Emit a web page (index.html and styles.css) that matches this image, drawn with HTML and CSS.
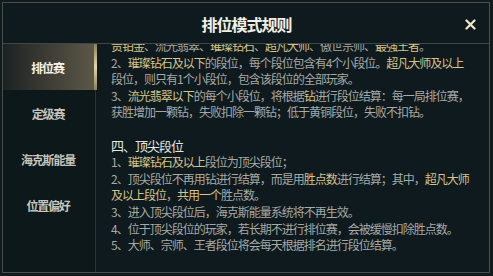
FILE: index.html
```html
<!DOCTYPE html>
<html lang="zh-CN">

<head>
    <meta charset="UTF-8">
    <meta name="viewport" content="width=device-width, initial-scale=1.0">
    <title>排位模式规则</title>
    <link rel="stylesheet" href="styles.css">
</head>

<body>
    <div class="panel">
        <div class="panel-head">
            <span></span>
            <h1 class="title">排位模式规则</h1>
            <span class="close">
                <svg width="11" height="11" viewBox="0 0 11 11">
                    <path d="M1.5 1.5 L9.5 9.5 M9.5 1.5 L1.5 9.5" stroke="#ece4cc" stroke-width="2.3" stroke-linecap="round" fill="none"/>
                </svg>
            </span>
        </div>
        <div class="panel-body">
            <ul class="tabs">
                <li class="tab active">排位赛</li>
                <li class="tab">定级赛</li>
                <li class="tab">海克斯能量</li>
                <li class="tab">位置偏好</li>
            </ul>
            <div class="content">
                <div class="scroll">
                    <p><span class="gold">贵铂金</span>、流光翡翠、<span class="gold">璀璨钻石</span>、<span class="gold">超凡大师</span>、傲世宗师、<span class="gold">最强王者</span>。</p>
                    <p>2、<span class="gold">璀璨钻石及以下</span>的段位，每个段位包含有4个小段位。<span class="gold">超凡大师及以上</span><br>段位，则只有1个小段位，包含该段位的全部玩家。</p>
                    <p>3、<span class="gold">流光翡翠以下</span>的每个小段位，将根据<span class="gold">钻</span>进行段位结算：每一局排位赛，<br>获胜增加一颗钻，失败扣除一颗钻；低于黄铜段位，失败不扣钻。</p>
                    <p class="blank"></p>
                    <h2 class="sub">四、顶尖段位</h2>
                    <p>1、<span class="gold">璀璨钻石及以上</span>段位为顶尖段位；</p>
                    <p>2、顶尖段位不再用钻进行结算，而是用<span class="gold">胜点数</span>进行结算；其中，<span class="gold">超凡大师</span><br><span class="gold">及以上段位</span>，<span class="gold">共用一个</span>胜点数。</p>
                    <p>3、进入顶尖段位后，海克斯能量系统将不再生效。</p>
                    <p>4、位于顶尖段位的玩家，若长期不进行排位赛，会被缓慢扣除胜点数。</p>
                    <p>5、大师、宗师、王者段位将会每天根据排名进行段位结算。</p>
                </div>
            </div>
        </div>
    </div>
</body>

</html>
```

FILE: styles.css
```css
* {
    padding: 0;
    margin: 0;
    box-sizing: border-box;
}

body {
    background-color: #131a1b;
    font-family: "Noto Sans CJK SC", "Noto Sans", sans-serif;
    width: 493px;
    height: 276px;
    overflow: hidden;
}

ul {
    list-style: none;
}

.panel {
    margin: 2px 3px 3px 2px;
    height: 271px;
    border: 1px solid #465050;
    background-color: #0e1a1d;
    display: flex;
    flex-direction: column;
}

.panel-head {
    height: 41px;
    border-bottom: 1px solid #3e4747;
    display: grid;
    grid-template-columns: 1fr auto 1fr;
    align-items: center;
    padding-right: 13px;
    padding-left: 13px;
}

.title {
    font-size: 16px;
    font-weight: bold;
    letter-spacing: -1px;
    color: #f3efe4;
    line-height: 20px;
    margin-top: 1px;
    margin-left: 1px;
}

.close {
    justify-self: end;
    display: flex;
    margin-top: 2px;
}

.panel-body {
    flex: 1;
    display: flex;
    min-height: 0;
}

.tabs {
    width: 93px;
    border-right: 1px solid #2a3335;
    background-color: #0d181b;
}

.tab {
    height: 46px;
    display: flex;
    align-items: center;
    justify-content: center;
    font-size: 12px;
    font-weight: bold;
    letter-spacing: -1.2px;
    color: #c6c4bb;
    padding-right: 2px;
}

.tab.active {
    color: #f6f2e6;
    background: linear-gradient(to right, #1c2221, #3a3a33 45%, #5c5848);
    border-right: 3px solid #cbb986;
    border-image: linear-gradient(to bottom, #8c7a55, #e4d6a6 50%, #8c7a55) 1;
    margin-right: -2px;
}

.content {
    flex: 1;
    overflow: hidden;
    padding-left: 15px;
}

.scroll {
    margin-top: -6px;
    font-size: 12px;
    letter-spacing: -1px;
    line-height: 16.6px;
    color: #a7a9a5;
    white-space: nowrap;
}

.blank {
    height: 16.6px;
}

.sub {
    font-size: 13px;
    font-weight: normal;
    letter-spacing: -1px;
    color: #e6e6e2;
    line-height: 16.6px;
}

.gold {
    color: #d6c38b;
}
```
